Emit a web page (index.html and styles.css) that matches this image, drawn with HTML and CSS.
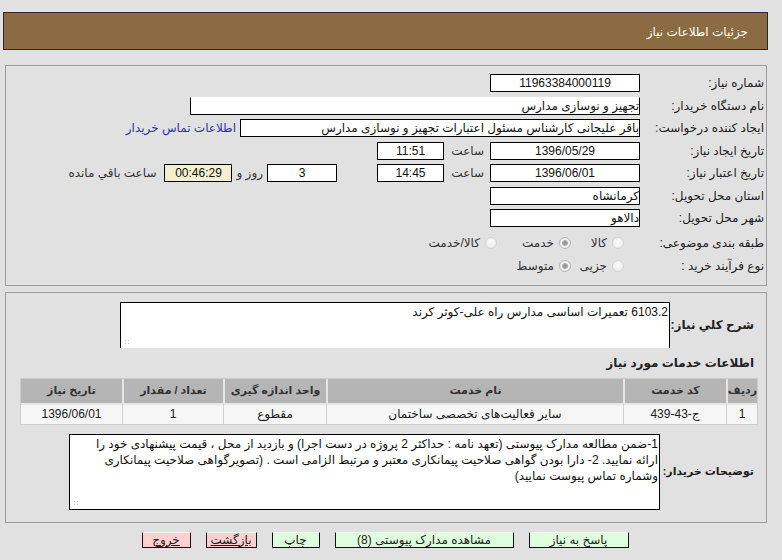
FILE: index.html
```html
<!DOCTYPE html>
<html lang="fa" dir="rtl">
<head>
<meta charset="utf-8">
<title>جزئیات اطلاعات نیاز</title>
<link rel="stylesheet" href="styles.css">
</head>
<body>
<div class="page">
  <div class="header"><span class="title">جزئیات اطلاعات نیاز</span></div>

  <div class="panel panel-info">
    <div class="row">
      <div class="label">شماره نیاز:</div>
      <div class="box w150 center">11963384000119</div>
    </div>
    <div class="row">
      <div class="label">نام دستگاه خریدار:</div>
      <div class="box w450 notop">تجهیز و نوسازی مدارس</div>
    </div>
    <div class="row">
      <div class="label">ایجاد کننده درخواست:</div>
      <div class="box w400">باقر علیجانی کارشناس مسئول اعتبارات تجهیز و نوسازی مدارس</div>
      <a class="link" href="#">اطلاعات تماس خریدار</a>
    </div>
    <div class="row">
      <div class="label">تاریخ ایجاد نیاز:</div>
      <div class="box w150 center">1396/05/29</div>
      <span class="word hour">ساعت</span>
      <div class="box w67 center">11:51</div>
    </div>
    <div class="row">
      <div class="label">تاریخ اعتبار نیاز:</div>
      <div class="box w150 center">1396/06/01</div>
      <span class="word hour">ساعت</span>
      <div class="box w67 center">14:45</div>
      <div class="box w70 center days">3</div>
      <span class="word day">روز و</span>
      <div class="box w68 center remain">00:46:29</div>
      <span class="word left">ساعت باقي مانده</span>
    </div>
    <div class="row">
      <div class="label">استان محل تحویل:</div>
      <div class="box w150">کرمانشاه</div>
    </div>
    <div class="row">
      <div class="label">شهر محل تحویل:</div>
      <div class="box w150">دالاهو</div>
    </div>
    <div class="row radios first">
      <div class="label">طبقه بندی موضوعی:</div>
      <div class="opt o1"><span class="radio"></span><span>کالا</span></div>
      <div class="opt o2"><span class="radio on"></span><span>خدمت</span></div>
      <div class="opt o3"><span class="radio"></span><span>کالا/خدمت</span></div>
    </div>
    <div class="row radios">
      <div class="label">نوع فرآیند خرید :</div>
      <div class="opt o1"><span class="radio"></span><span>جزیی</span></div>
      <div class="opt o2"><span class="radio on"></span><span>متوسط</span></div>
    </div>
  </div>

  <div class="panel panel-detail">
    <div class="drow desc">
      <div class="dlabel">شرح کلي نیاز:</div>
      <div class="area area-desc">6103.2 تعمیرات اساسی مدارس راه علی-کوثر کرند<span class="grip"></span></div>
    </div>
    <div class="subtitle">اطلاعات خدمات مورد نیاز</div>
    <table class="grid">
      <colgroup>
        <col class="c1"><col class="c2"><col class="c3"><col class="c4"><col class="c5"><col class="c6">
      </colgroup>
      <thead>
        <tr>
          <th>ردیف</th>
          <th>کد خدمت</th>
          <th>نام خدمت</th>
          <th>واحد اندازه گیری</th>
          <th>تعداد / مقدار</th>
          <th class="last">تاریخ نیاز</th>
        </tr>
      </thead>
      <tbody>
        <tr>
          <td>1</td>
          <td>ج-43-439</td>
          <td>سایر فعالیت‌های تخصصی ساختمان</td>
          <td>مقطوع</td>
          <td>1</td>
          <td class="last">1396/06/01</td>
        </tr>
      </tbody>
    </table>
    <div class="drow notes">
      <div class="dlabel">توضیحات خریدار:</div>
      <div class="area area-notes">1-ضمن مطالعه مدارک پیوستی (تعهد نامه : حداکثر 2 پروژه در دست اجرا) و بازدید از محل ، قیمت پیشنهادی خود را<br>ارائه نمایید. 2- دارا بودن گواهی صلاحیت پیمانکاری معتبر و مرتبط الزامی است . (تصویرگواهی صلاحیت پیمانکاری<br>وشماره تماس پیوست نمایید)<span class="grip"></span></div>
    </div>
  </div>

  <div class="buttons">
    <span class="btn green b1">پاسخ به نیاز</span>
    <span class="btn green b2">مشاهده مدارک پیوستی (8)</span>
    <span class="btn green b3">چاپ</span>
    <span class="btn pink b4">بازگشت</span>
    <span class="btn pink b5">خروج</span>
  </div>
</div>
</body>
</html>
```

FILE: styles.css
```css
html, body {
  margin: 0;
  padding: 0;
}
body {
  background: #e1e1e1;
  font-family: "Liberation Sans", "DejaVu Sans", sans-serif;
  font-size: 12px;
  color: #222;
}
.page {
  width: 782px;
}
.header {
  margin: 12px 14px 0 3px;
  height: 34px;
  background: #8b6b42;
  border: 1px solid #2a2a2a;
  display: flex;
  align-items: center;
  padding-right: 19px;
  padding-top: 2px;
  box-sizing: content-box;
}
.title {
  color: #fff;
}
.panel {
  margin: 0 15px 0 5px;
  border: 1px solid #9c9c9c;
}
.panel-info {
  margin-top: 15px;
  padding: 6px 2px 7px 0;
}
.row {
  display: flex;
  align-items: center;
  height: 22.5px;
}
.row.radios {
  height: 23px;
}
.row.radios.first {
  margin-top: 2px;
}
.label {
  width: 124px;
  flex: none;
  text-align: right;
  white-space: nowrap;
}
.box {
  flex: none;
  box-sizing: border-box;
  height: 18px;
  border: 1px solid #000;
  background: #fff;
  line-height: 16px;
  white-space: nowrap;
  overflow: hidden;
  text-align: right;
  color: #111;
}
.box.center {
  text-align: center;
}
.box.notop {
  border-top-color: #fff;
}
.w150 { width: 150px; }
.w450 { width: 450px; }
.w400 { width: 400px; }
.w67 { width: 67px; }
.w70 { width: 70px; }
.w68 { width: 68px; }
.box.remain {
  background: #f4f0cf;
}
.word {
  white-space: nowrap;
  color: #333;
}
.hour {
  width: 36px;
  margin: 0 6px 0 4px;
  text-align: right;
}
.days {
  margin-right: 40px;
}
.day {
  margin: 0 4px;
}
.left {
  margin-right: 8px;
}
.link {
  margin-right: 4px;
  color: #3030b8;
  text-decoration: none;
  white-space: nowrap;
}
.opt {
  display: flex;
  align-items: center;
  flex: none;
  white-space: nowrap;
  color: #333;
}
.opt .radio {
  margin-left: 5px;
}
.opt.o1 {
  width: 47px;
  padding-right: 16px;
}
.opt.o2 {
  width: 70px;
  padding-right: 6px;
}
.opt.o3 {
  padding-right: 4px;
}
.radio {
  position: relative;
  display: inline-block;
  width: 12px;
  height: 12px;
  box-sizing: border-box;
  border-radius: 50%;
  border: 1px solid #d2d2d2;
  background: radial-gradient(circle at 50% 40%, #fbfbfb, #e8e8e8);
  flex: none;
}
.radio.on {
  border-color: #b5b5b5;
}
.radio.on::after {
  content: "";
  position: absolute;
  left: 2px;
  top: 2px;
  width: 4px;
  height: 4px;
  border-radius: 50%;
  border: 1px solid #a8a8a8;
  background: #9a9a9a;
}

.panel-detail {
  margin-top: 6px;
  padding: 9px 0 12px 0;
}
.drow {
  display: flex;
  align-items: center;
}
.dlabel {
  flex: none;
  font-weight: bold;
  color: #222;
  padding-right: 12px;
  white-space: nowrap;
  text-align: right;
}
.desc .dlabel {
  width: 84px;
}
.notes .dlabel {
  width: 94px;
  font-size: 11px;
}
.area {
  position: relative;
  flex: none;
  box-sizing: border-box;
  background: #fff;
  border: 1px solid #000;
  text-align: right;
  line-height: 16px;
  color: #111;
  white-space: nowrap;
  overflow: hidden;
  padding-right: 1px;
}
.area-desc {
  width: 550px;
  height: 46px;
  border-bottom: none;
  padding-top: 1px;
}
.area-notes {
  width: 591px;
  height: 76px;
  padding-top: 1px;
}
.grip {
  position: absolute;
  left: 3px;
  bottom: 3px;
  width: 6px;
  height: 6px;
  background-image: radial-gradient(circle, #c8c8c8 0.8px, transparent 1px);
  background-size: 3px 3px;
}
.subtitle {
  font-weight: bold;
  color: #222;
  padding-right: 12px;
  margin-top: 7px;
  height: 16px;
  line-height: 16px;
}
.grid {
  margin: 7px 8px 0 13px;
  width: 738px;
  box-sizing: border-box;
  border-collapse: separate;
  border-spacing: 0;
  table-layout: fixed;
  border: 1px solid #cdcdcd;
  background: #e6e6e6;
}
.grid .c1 { width: 31px; }
.grid .c2 { width: 103px; }
.grid .c3 { width: 297px; }
.grid .c4 { width: 103px; }
.grid .c5 { width: 101px; }
.grid .c6 { width: 101px; }
.grid th {
  height: 24px;
  background: #b5b5b5;
  font-weight: bold;
  font-size: 11px;
  color: #333;
  border-left: 2px solid #e6e6e6;
  padding: 0;
  white-space: nowrap;
  overflow: hidden;
}
.grid td {
  height: 19px;
  background: #f6f6f6;
  border-top: 2px solid #e6e6e6;
  border-left: 1px solid #d0d0d0;
  text-align: center;
  padding: 0;
  color: #222;
  white-space: nowrap;
}
.grid .last {
  border-left: none;
}
.notes {
  margin-top: 9px;
}

.buttons {
  display: flex;
  justify-content: center;
  gap: 15px;
  margin-top: 9px;
  padding-right: 12px;
}
.btn {
  display: inline-block;
  box-sizing: border-box;
  height: 16px;
  line-height: 14px;
  text-align: center;
  border: 1px solid #111;
  border-top-color: #f4f4f4;
  color: #222;
  white-space: nowrap;
}
.green { background: #ddfddd; }
.pink { background: #ffd0d0; text-decoration: underline; }
.b1 { width: 100px; }
.b2 { width: 179px; }
.b3 { width: 48px; }
.b4 { width: 51px; }
.b5 { width: 49px; }
```
